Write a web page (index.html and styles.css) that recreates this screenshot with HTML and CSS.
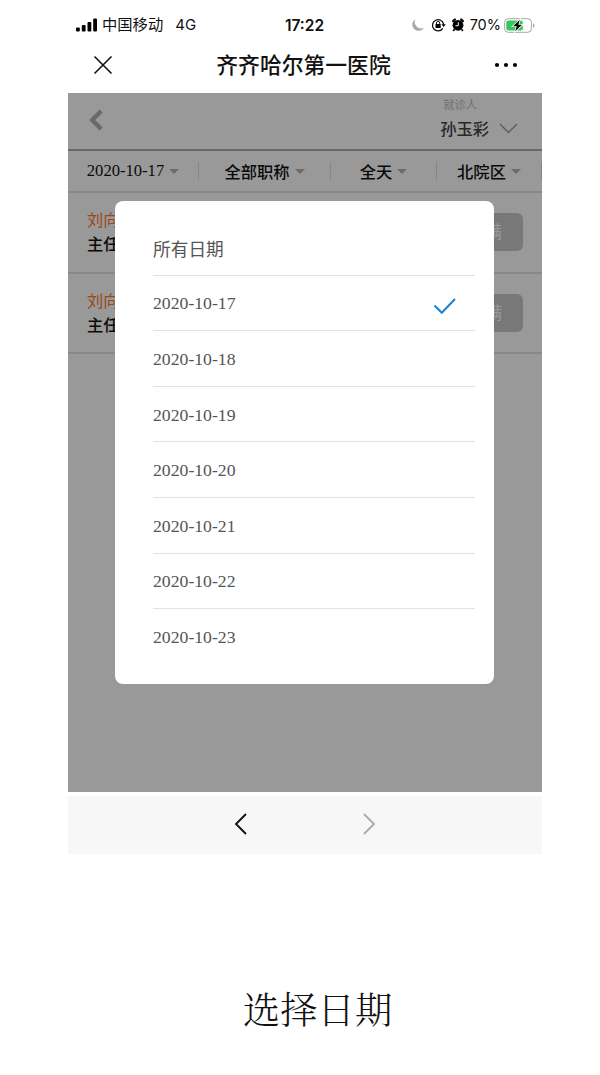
FILE: index.html
```html
<!DOCTYPE html>
<html lang="zh-CN">

<head>
    <meta charset="UTF-8">
    <title>齐齐哈尔第一医院</title>
    <link rel="stylesheet" href="styles.css">
</head>

<body>
    <div class="phone">
        <div class="status-bar">
            <div class="carrier">
                <svg width="22" height="14" viewBox="0 0 22 14">
                    <rect x="0" y="9.5" width="3.8" height="4" rx="1" />
                    <rect x="5.8" y="7" width="3.8" height="6.5" rx="1" />
                    <rect x="11.5" y="4" width="3.8" height="9.5" rx="1" />
                    <rect x="17.2" y="0.5" width="3.8" height="13" rx="1" />
                </svg>
                <span class="carrier-name">中国移动</span>
                <span class="network">4G</span>
            </div>
            <div class="time">17:22</div>
            <div class="indicators">
                <svg width="14" height="14" viewBox="0 0 14 14">
                    <path d="M4.5 1A6.3 6.3 0 1 0 13 9.7A6.4 6.4 0 0 1 4.5 1Z" fill="#aaa" />
                </svg>
                <svg class="lock" width="15" height="14" viewBox="0 0 15 14">
                    <path d="M11.8 10.3A5.6 5.6 0 1 1 12.6 6.3" fill="none" stroke="#111" stroke-width="1.3" />
                    <path d="M10.4 6.2H14.8L12.6 9Z" />
                    <rect x="4.5" y="6" width="5.2" height="4" rx=".5" />
                    <path d="M5.5 6V5a1.6 1.6 0 0 1 3.2 0V6" fill="none" stroke="#111" />
                </svg>
                <svg class="alarm" width="12" height="14" viewBox="0 0 12 14">
                    <circle cx="6" cy="7.3" r="5.4" />
                    <path d="M1.2 3.2L2.8 1.6M10.8 3.2L9.2 1.6" stroke="#111" stroke-width="2.4" stroke-linecap="round" />
                    <path d="M2.4 11.2L1.2 13M9.6 11.2L10.8 13" stroke="#111" stroke-width="1.8" />
                    <path d="M6.3 4.3V7.7H3.5" fill="none" stroke="#fff" stroke-width="1" />
                </svg>
                <span class="percent">70%</span>
                <svg class="battery" width="31" height="15" viewBox="0 0 31 15">
                    <rect x=".6" y=".7" width="26.8" height="13.6" rx="3.6" fill="#fff" stroke="#a5a5a5" />
                    <rect x="2.3" y="2.4" width="16.5" height="10.2" rx="2" fill="#34c759" />
                    <path d="M29 5.2a2.5 2.5 0 0 1 0 4.6Z" fill="#a5a5a5" />
                    <path d="M15.8 1.8L9 8.2H12.7L11.2 13.2L18 6.8H14.3Z" stroke="#fff" stroke-width="1.6" paint-order="stroke" />
                </svg>
            </div>
        </div>

        <div class="title-bar">
            <svg class="close" width="20" height="20" viewBox="0 0 20 20">
                <path d="M1.5 1.5L18.5 18.5M18.5 1.5L1.5 18.5" fill="none" stroke="#111" stroke-width="1.6" />
            </svg>
            <h1>齐齐哈尔第一医院</h1>
            <svg class="more" width="24" height="6" viewBox="0 0 24 6">
                <circle cx="3" cy="3" r="2.1" />
                <circle cx="12" cy="3" r="2.1" />
                <circle cx="21" cy="3" r="2.1" />
            </svg>
        </div>

        <div class="page">
            <div class="page-header">
                <svg width="15" height="22" viewBox="0 0 15 22">
                    <path d="M12.2 2L3.2 11L12.2 20" fill="none" stroke="#b0b0b0" stroke-width="4.4" />
                </svg>
                <div class="patient">
                    <div class="patient-label">就诊人</div>
                    <div class="patient-name">孙玉彩
                        <svg width="19" height="11" viewBox="0 0 19 11">
                            <path d="M1 1L9.5 9.5L18 1" fill="none" stroke="#999" stroke-width="1.4" />
                        </svg>
                    </div>
                </div>
            </div>
            <div class="filters">
                <div class="filter date">2020-10-17<i class="arrow"></i></div>
                <div class="filter">全部职称<i class="arrow"></i></div>
                <div class="filter">全天<i class="arrow"></i></div>
                <div class="filter">北院区<i class="arrow"></i></div>
            </div>
            <div class="doctor">
                <div>
                    <div class="doctor-name">刘向</div>
                    <div class="doctor-title">主任</div>
                </div>
                <div class="full">已满</div>
            </div>
            <div class="doctor">
                <div>
                    <div class="doctor-name">刘向</div>
                    <div class="doctor-title">主任</div>
                </div>
                <div class="full">已满</div>
            </div>

            <div class="overlay">
                <div class="modal">
                    <div class="option all">所有日期</div>
                    <div class="option selected">2020-10-17
                        <svg width="24" height="18" viewBox="0 0 24 18">
                            <path d="M1.5 8.5L8.8 15.8L22 2" fill="none" stroke="#1b82d1" stroke-width="2" />
                        </svg>
                    </div>
                    <div class="option">2020-10-18</div>
                    <div class="option">2020-10-19</div>
                    <div class="option">2020-10-20</div>
                    <div class="option">2020-10-21</div>
                    <div class="option">2020-10-22</div>
                    <div class="option">2020-10-23</div>
                </div>
            </div>
        </div>

        <div class="bottom-nav">
            <svg width="14" height="22" viewBox="0 0 14 22">
                <path d="M12 1L2 11L12 21" fill="none" stroke="#111" stroke-width="1.9" />
            </svg>
            <svg width="14" height="22" viewBox="0 0 14 22">
                <path d="M2 1L12 11L2 21" fill="none" stroke="#aaa" stroke-width="1.8" />
            </svg>
        </div>
    </div>
    <p class="caption">选择日期</p>
</body>

</html>
```

FILE: styles.css
```css
* {
    box-sizing: border-box;
}

body {
    margin: 0;
    background: #fff;
    color: #111;
    font-family: "Liberation Serif", "Noto Sans CJK SC", serif;
}

svg {
    display: block;
    flex-shrink: 0;
}

.phone {
    width: 474px;
    margin-left: 68px;
}

.status-bar {
    display: grid;
    grid-template-columns: 1fr 44px 1fr;
    align-items: center;
    height: 38px;
    padding: 12px 7px 0 8px;
    font-family: Inter, "Noto Sans CJK SC", sans-serif;
}

.carrier,
.indicators {
    display: flex;
    align-items: center;
    line-height: 26px;
    white-space: nowrap;
}

.carrier-name {
    margin-left: 4px;
    font-size: 15.3px;
}

.network {
    margin-left: 12px;
    font-size: 15px;
}

.time {
    margin-left: -2px;
    font-size: 15.5px;
    font-weight: 600;
    text-align: center;
}

.indicators {
    justify-content: flex-end;
}

.lock {
    margin-left: 6px;
}

.alarm {
    margin-left: 6px;
}

.percent {
    margin-left: 6px;
    font-size: 14.5px;
}

.battery {
    margin-left: 3px;
}

.title-bar {
    display: flex;
    align-items: center;
    justify-content: space-between;
    height: 55px;
    padding: 0 24px 2px 25px;
}

.title-bar h1 {
    margin: -1px 0 0;
    font-family: "Noto Sans CJK SC", sans-serif;
    font-size: 21.8px;
    font-weight: 500;
    line-height: 30px;
}

.page {
    position: relative;
    height: 699px;
    background: #fff;
    font-family: "Noto Sans CJK SC", sans-serif;
}

.page-header {
    display: flex;
    align-items: center;
    justify-content: space-between;
    height: 58px;
    padding: 0 24px 2px 21px;
    border-bottom: 2px solid #adadad;
}

.patient {
    color: #444;
}

.patient-label {
    padding-left: 3px;
    color: #bbb;
    font-size: 11.3px;
    line-height: 16px;
}

.patient-name {
    display: flex;
    align-items: center;
    gap: 10px;
    font-size: 16.3px;
    font-weight: 500;
    line-height: 32px;
}

.filters {
    display: grid;
    grid-template-columns: 131px 132px 106px 105px;
    height: 42px;
    border-bottom: 2px solid #e3e3e3;
}

.filter {
    display: flex;
    align-items: center;
    justify-content: center;
    gap: 5px;
    height: 18px;
    margin-top: 11px;
    border-right: 1px solid #e0e0e0;
    font-size: 16.3px;
    font-weight: 500;
}

.date {
    font-family: "Liberation Serif", serif;
    font-size: 16.6px;
    font-weight: normal;
}

.arrow {
    border: 5.5px solid transparent;
    border-top-color: #b4b4b4;
    border-bottom: 0;
}

.doctor {
    display: flex;
    align-items: center;
    justify-content: space-between;
    height: 80.5px;
    padding: 0 19px;
    border-bottom: 2px solid #e3e3e3;
    font-size: 16.3px;
    font-weight: 500;
    line-height: 25px;
}

.doctor-name,
.doctor-title {
    margin-top: -1px;
}

.doctor-name {
    color: #ff7a2c;
    font-weight: normal;
}

.full {
    width: 76px;
    height: 38px;
    border-radius: 6px;
    background: #c8c8ca;
    color: #fff;
    font-size: 17px;
    font-weight: normal;
    line-height: 36px;
    text-align: center;
}

.overlay {
    position: absolute;
    inset: 0;
    padding: 108px 48px 0 47px;
    background: rgba(0, 0, 0, 0.4);
}

.modal {
    height: 483px;
    padding: 19px 19px 0 38px;
    border-radius: 8px;
    background: #fff;
}

.option {
    display: flex;
    align-items: center;
    justify-content: space-between;
    height: 55.6px;
    padding-top: 2px;
    border-bottom: 1px solid #e2e2e2;
    color: #555;
    font-family: "Liberation Serif", serif;
    font-size: 17.7px;
}

.option:last-child {
    border-bottom: none;
}

.all {
    padding-top: 1px;
    font-family: "Noto Sans CJK SC", sans-serif;
}

.selected svg {
    margin: 5px 18px 0 0;
}

.bottom-nav {
    display: flex;
    align-items: center;
    justify-content: center;
    gap: 114px;
    height: 58px;
    margin-top: 4px;
    padding-bottom: 3px;
    background: #f7f7f7;
}

.caption {
    margin: 124px 0 0;
    padding-left: 243px;
    font-family: "Noto Serif CJK SC", "Noto Sans CJK SC", serif;
    font-size: 37.3px;
    font-weight: 300;
    line-height: 60px;
}
```
